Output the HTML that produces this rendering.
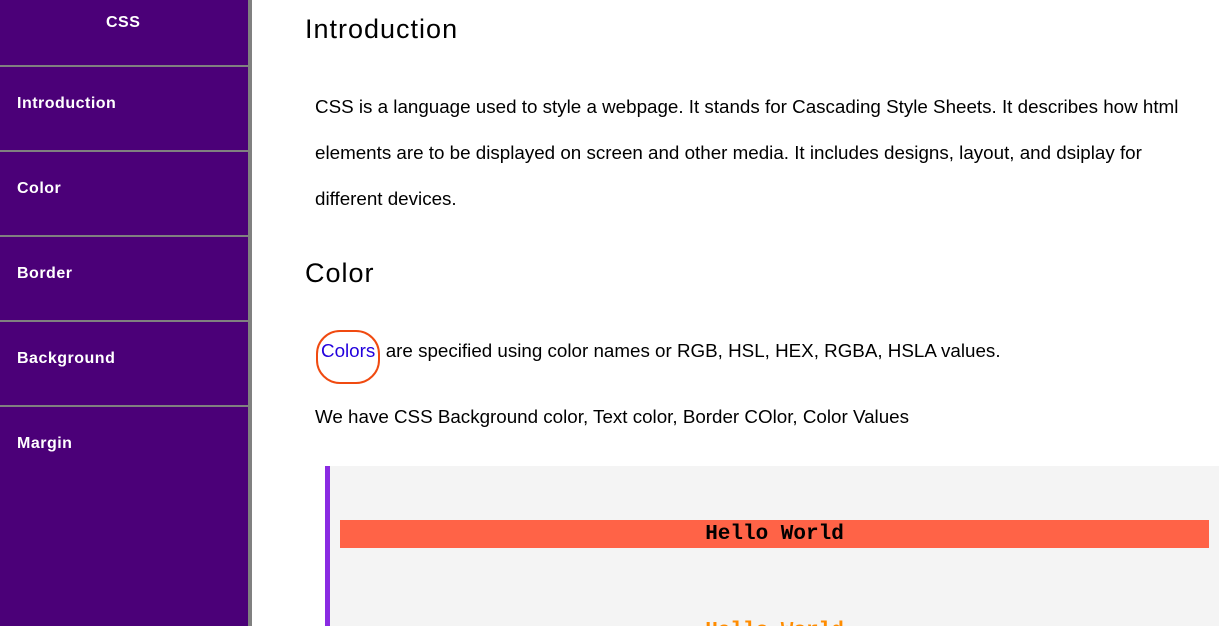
<!DOCTYPE html>
<html><head><style>
html,body{margin:0;width:1224px;height:626px;overflow:hidden}
body{font-family:"Liberation Sans",sans-serif;background:#fff;position:relative}
.side{position:absolute;left:0;top:0;width:248px;height:626px;background:#4b0078;border-right:4px solid #808080}
.side div{position:absolute;left:17px;color:#fff;font-weight:bold;font-size:16px;letter-spacing:0.5px}
.line{position:absolute;left:0;width:248px;height:2px;background:#808080}
.t{position:absolute;white-space:nowrap}
h2{position:absolute;margin:0;font-weight:normal;font-size:27px;letter-spacing:1px;left:305px;color:#000}
p{position:absolute;margin:0;left:315px;font-size:18.8px;line-height:46px;white-space:nowrap;color:#000}
</style></head><body>
<div class="side">
<div style="left:106px;top:14px">CSS</div>
<div style="top:95px">Introduction</div>
<div style="top:180px">Color</div>
<div style="top:265px">Border</div>
<div style="top:350px">Background</div>
<div style="top:435px">Margin</div>
</div>
<div class="line" style="top:65px"></div>
<div class="line" style="top:150px"></div>
<div class="line" style="top:235px"></div>
<div class="line" style="top:320px"></div>
<div class="line" style="top:405px"></div>
<h2 style="top:14px">Introduction</h2>
<p style="top:84px">CSS is a language used to style a webpage. It stands for Cascading Style Sheets. It describes how html<br>elements are to be displayed on screen and other media. It includes designs, layout, and dsiplay for<br>different devices.</p>
<h2 style="top:258px">Color</h2>
<div class="t" style="left:316px;top:330px;width:60px;height:50px;border:2.5px solid #f04a10;border-radius:24px"></div>
<div class="t" style="left:321px;top:340px;font-size:18.8px"><span style="color:#2200dd">Colors</span>&nbsp; are specified using color names or RGB, HSL, HEX, RGBA, HSLA values.</div>
<div class="t" style="left:315px;top:406px;font-size:18.8px">We have CSS Background color, Text color, Border COlor, Color Values</div>
<div class="t" style="left:325px;top:466px;width:889px;height:160px;background:#f4f4f4;border-left:5px solid #8a2be2"></div>
<div class="t" style="left:340px;top:520px;width:869px;height:28px;background:#ff6347;font-family:'Liberation Mono',monospace;font-weight:bold;font-size:21px;line-height:30px;text-align:center;color:#000">Hello World</div>
<div class="t" style="left:340px;top:618px;width:869px;font-family:'Liberation Mono',monospace;font-weight:bold;font-size:21px;line-height:28px;text-align:center;color:#ff8c00">Hello World</div>
</body></html>
